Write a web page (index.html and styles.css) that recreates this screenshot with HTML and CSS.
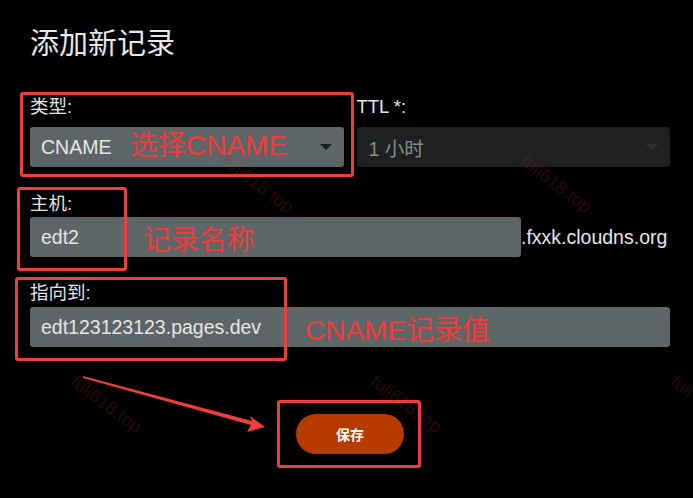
FILE: index.html
```html
<!DOCTYPE html>
<html lang="zh">
<head>
<meta charset="utf-8">
<title>添加新记录</title>
<link rel="stylesheet" href="styles.css">
</head>
<body>
<div class="page">
  <h1 class="title">添加新记录</h1>
  <div class="row-two">
    <div class="field">
      <div class="label">类型:</div>
      <div class="select"><span>CNAME</span><i class="caret"></i></div>
    </div>
    <div class="field">
      <div class="label">TTL *:</div>
      <div class="select select-dark"><span>1 小时</span><i class="caret caret-dark"></i></div>
    </div>
  </div>
  <div class="field field-host">
    <div class="label">主机:</div>
    <div class="host-line">
      <div class="input input-host">edt2</div>
      <span class="suffix">.fxxk.cloudns.org</span>
    </div>
  </div>
  <div class="field field-point">
    <div class="label">指向到:</div>
    <div class="input">edt123123123.pages.dev</div>
  </div>
  <div class="actions">
    <button class="btn">保存</button>
  </div>
</div>

<div class="overlay">
  <div class="wm wm1">fuli618.top</div>
  <div class="wm wm2">fuli618.top</div>
  <div class="wm wm3">fuli618.top</div>
  <div class="wm wm4">fuli618.top</div>
  <div class="wm wm5">fuli</div>

  <div class="mark mark-type"></div>
  <div class="mark mark-host"></div>
  <div class="mark mark-point"></div>
  <div class="mark mark-btn"></div>

  <div class="note note1">选择CNAME</div>
  <div class="note note2">记录名称</div>
  <div class="note note3">CNAME记录值</div>

  <svg class="arrow" width="693" height="498" viewBox="0 0 693 498">
    <polygon points="83,376 252,421 250,416 265,427 247,432 251,425 83,378" fill="#f03c3c"/>
  </svg>
</div>
</body>
</html>
```

FILE: styles.css
```css
html, body {
  margin: 0;
  padding: 0;
  background: #000;
}
body {
  width: 693px;
  height: 498px;
  position: relative;
  overflow: hidden;
  font-family: "Liberation Sans", "Noto Sans CJK SC", sans-serif;
  color: #e4e4e4;
}
.page {
  padding: 23px 23px 0 30px;
  width: 640px;
}
.title {
  margin: 0;
  font-family: "Noto Sans CJK SC", sans-serif;
  font-weight: 400;
  font-size: 29px;
  line-height: 36px;
  color: #e8e8e8;
}
.row-two {
  display: flex;
  gap: 13px;
  margin-top: 38px;
}
.row-two .field {
  flex: 1;
}
.label {
  font-size: 18.5px;
  line-height: 20px;
  height: 20px;
  color: #e4e4e4;
  font-family: "Liberation Sans", "Noto Sans CJK SC", sans-serif;
}
.select {
  margin-top: 10px;
  height: 40px;
  border-radius: 3px;
  background: #5e6567;
  display: flex;
  align-items: center;
  justify-content: space-between;
  padding: 0 12px 0 11px;
  font-size: 19.5px;
  color: #e6e6e6;
}
.select-dark {
  background: #1f2022;
  color: #8a8a8a;
  padding-left: 12px;
}
.caret {
  width: 0;
  height: 0;
  border-left: 6px solid transparent;
  border-right: 6px solid transparent;
  border-top: 6px solid #1c1c1c;
}
.caret-dark {
  border-top-color: #2e3032;
}
.field-host {
  margin-top: 27px;
}
.host-line {
  display: flex;
  align-items: center;
  margin-top: 3px;
}
.input {
  height: 40px;
  border-radius: 3px;
  background: #5e6567;
  display: flex;
  align-items: center;
  padding-left: 11px;
  font-size: 19.5px;
  color: #e6e6e6;
  box-sizing: border-box;
}
.input-host {
  width: 491px;
}
.suffix {
  font-size: 19.5px;
  color: #e6e6e6;
}
.field-point {
  margin-top: 26px;
}
.field-point .input {
  margin-top: 4px;
}
.actions {
  display: flex;
  justify-content: center;
  margin-top: 67px;
}
.btn {
  width: 108px;
  height: 40px;
  border: 0;
  border-radius: 20px;
  background: #b73a00;
  color: #fff;
  font-family: "Noto Sans CJK SC", sans-serif;
  font-weight: 700;
  font-size: 14px;
  padding: 0;
}

.overlay {
  position: absolute;
  left: 0;
  top: 0;
  width: 693px;
  height: 498px;
  pointer-events: none;
}
.wm {
  position: absolute;
  font-family: "Liberation Sans", sans-serif;
  font-size: 18px;
  color: rgba(160, 35, 35, 0.26);
  transform-origin: 0 0;
  transform: rotate(37deg);
  white-space: nowrap;
}
.wm1 { left: 231px; top: 151px; }
.wm2 { left: 529px; top: 151px; }
.wm3 { left: 79px; top: 371px; }
.wm4 { left: 379px; top: 371px; }
.wm5 { left: 679px; top: 371px; }

.mark {
  position: absolute;
  border: 3px solid #f03c3c;
  border-radius: 3px;
  box-sizing: border-box;
}
.mark-type { left: 20px; top: 92px; width: 334px; height: 85px; }
.mark-host { left: 17px; top: 187px; width: 110px; height: 84px; }
.mark-point { left: 15px; top: 277px; width: 272px; height: 84px; }
.mark-btn { left: 277px; top: 400px; width: 144px; height: 68px; }

.note {
  position: absolute;
  font-family: "Liberation Sans", "Noto Sans CJK SC", sans-serif;
  font-size: 28px;
  line-height: 32px;
  color: #f03c3c;
  white-space: nowrap;
}
.note1 { left: 130px; top: 130px; }
.note2 { left: 143px; top: 225px; }
.note3 { left: 305px; top: 315px; }

.arrow {
  position: absolute;
  left: 0;
  top: 0;
}
```
